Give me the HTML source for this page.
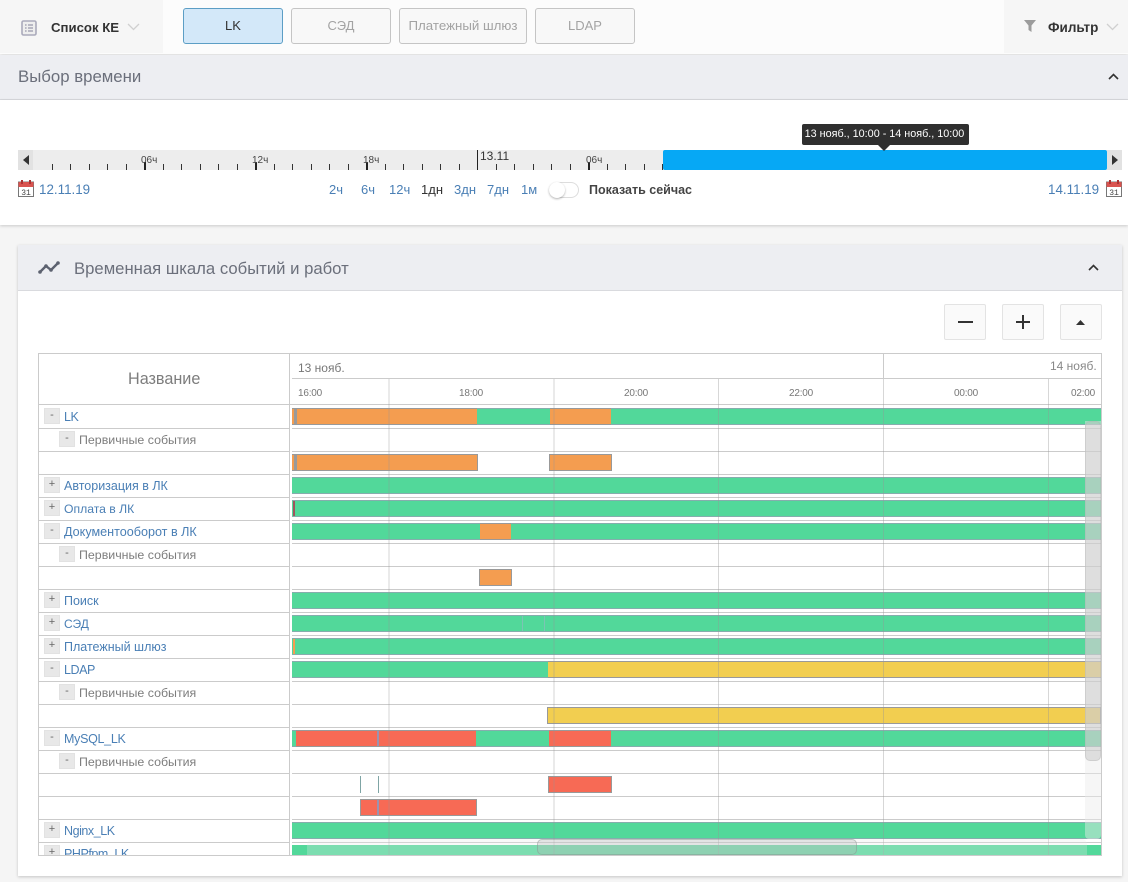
<!DOCTYPE html>
<html lang="ru"><head><meta charset="utf-8"><title>Временная шкала</title>
<style>
html,body{margin:0;padding:0;background:#f5f5f5}
body{width:1128px;height:882px;position:relative;overflow:hidden;font-family:"Liberation Sans",sans-serif;color:#333}
div,span,svg{position:absolute;box-sizing:border-box}
.t{white-space:nowrap;line-height:1}
.btn{top:8px;height:36px;width:100px;border:1px solid #c5c5c5;border-radius:3px;background:#f8f8f8;color:#a3a3a3;font-size:13px;text-align:center;line-height:34px;white-space:nowrap}
.tk{top:164px;width:1px;height:6px;background:#333}
.mj{top:162px;width:2px;height:8px;background:#222}
.p{top:183px;font-size:13px;line-height:1;color:#4a7fb5;white-space:nowrap}
.hl{height:1px;background:#cbcbcb}
.g{background:#52d89a;height:17px;border-top:1px solid #86adad;border-bottom:1px solid #86adad}
.o{background:#f49d50;height:17px;border-top:1px solid #999;border-bottom:1px solid #999}
.r{background:#f76a55;height:17px;border-top:1px solid #999;border-bottom:1px solid #999}
.y{background:#f2ce50;height:17px;border-top:1px solid #999;border-bottom:1px solid #999}
.b{border-left:1px solid #999;border-right:1px solid #999}
.vl{width:1px;background:rgba(150,150,150,.38);top:379px;height:476px}
.vw{width:2px;background:rgba(150,150,150,.2);top:379px;height:476px}
.tb{width:16px;height:16px;background:#e8e8e8;border:1px solid #e2e2e2;color:#666;font-size:11px;text-align:center;line-height:13px}
.n{font-size:12.500px;line-height:1;color:#4a7fb5;white-space:nowrap}
.l{letter-spacing:-.45px}
.s{font-size:12.400px;line-height:1;color:#7d7d7d;white-space:nowrap}
.hb{top:304px;width:42px;height:36px;background:#fafafa;border:1px solid #e3e3e3;border-radius:2px}
.h{font-size:10px;letter-spacing:-.2px;color:#777;line-height:1;white-space:nowrap;top:389px}
</style></head><body>

<div style="left:0;top:0;width:1128px;height:54px;background:#fcfcfc;box-shadow:0 1px 4px rgba(0,0,0,.12)"></div>
<div style="left:0;top:0;width:163px;height:53px;background:#f6f6f6"></div>
<div style="left:1004px;top:0;width:124px;height:53px;background:#f6f6f6"></div>
<svg style="left:21px;top:20px" width="16" height="16" viewBox="0 0 16 16"><rect x="1" y="1" width="14" height="14" rx="1.5" fill="#eee" stroke="#aab" stroke-width="1.6"/><path d="M4 5h1.6M7 5h5M4 8h1.6M7 8h5M4 11h1.6M7 11h5" stroke="#99a" stroke-width="1.3"/></svg>
<div class="t" style="left:51px;top:21px;font-size:13.200px;font-weight:bold;color:#333">Список КЕ</div>
<svg style="left:127px;top:23px" width="13" height="8" viewBox="0 0 13 8"><path d="M1 1l5.500 5.500L12 1" fill="none" stroke="#d0d0d0" stroke-width="1.3"/></svg>
<div class="btn" style="left:183px;background:#d3e8f9;border-color:#5c9ec5;color:#333">LK</div>
<div class="btn" style="left:291px">СЭД</div>
<div class="btn" style="left:399px;width:128px;font-size:13.300px">Платежный шлюз</div>
<div class="btn" style="left:535px">LDAP</div>
<svg style="left:1023px;top:19px" width="14" height="14" viewBox="0 0 14 14"><path d="M1 1h12L8.500 6.500V13L5.500 11V6.500Z" fill="#9c9c9c"/></svg>
<div class="t" style="left:1048px;top:21px;font-size:13.500px;font-weight:bold;color:#333">Фильтр</div>
<svg style="left:1106px;top:23px" width="13" height="8" viewBox="0 0 13 8"><path d="M1 1l5.500 5.500L12 1" fill="none" stroke="#d0d0d0" stroke-width="1.3"/></svg>

<div style="left:0;top:55px;width:1128px;height:45px;background:#edeef2;border-bottom:1px solid #d9dade"></div>
<div class="t" style="left:18px;top:69px;font-size:16.800px;color:#6b6f7b">Выбор времени</div>
<svg style="left:1108px;top:73px" width="11" height="8" viewBox="0 0 11 8"><path d="M1 6l4.500-4.500L10 6" fill="none" stroke="#333" stroke-width="1.600"/></svg>

<div style="left:0;top:100px;width:1128px;height:125px;background:#fff;box-shadow:0 1px 3px rgba(0,0,0,.18)"></div>
<div style="left:18px;top:150px;width:1104px;height:20px;background:#ededed"></div>
<div style="left:18px;top:150px;width:15px;height:20px;background:#e2e2e2"></div>
<div style="left:1107px;top:150px;width:15px;height:20px;background:#e2e2e2"></div>
<svg style="left:22px;top:155px" width="8" height="10"><path d="M7 0v10L1 5z" fill="#333"/></svg>
<svg style="left:1111px;top:155px" width="8" height="10"><path d="M1 0v10l6-5z" fill="#333"/></svg>

<div class="tk" style="left:52px"></div><div class="tk" style="left:70px"></div><div class="tk" style="left:89px"></div><div class="tk" style="left:107px"></div><div class="tk" style="left:126px"></div><div class="mj" style="left:144px"></div><div class="tk" style="left:163px"></div><div class="tk" style="left:181px"></div><div class="tk" style="left:200px"></div><div class="tk" style="left:218px"></div><div class="tk" style="left:237px"></div><div class="mj" style="left:255px"></div><div class="tk" style="left:274px"></div><div class="tk" style="left:292px"></div><div class="tk" style="left:311px"></div><div class="tk" style="left:329px"></div><div class="tk" style="left:348px"></div><div class="mj" style="left:366px"></div><div class="tk" style="left:385px"></div><div class="tk" style="left:403px"></div><div class="tk" style="left:422px"></div><div class="tk" style="left:440px"></div><div class="tk" style="left:459px"></div>
<div style="left:477px;top:150px;width:1px;height:20px;background:#222"></div>
<div class="tk" style="left:496px"></div><div class="tk" style="left:514px"></div><div class="tk" style="left:533px"></div><div class="tk" style="left:551px"></div><div class="tk" style="left:570px"></div><div class="mj" style="left:588px"></div><div class="tk" style="left:607px"></div><div class="tk" style="left:625px"></div><div class="tk" style="left:644px"></div><div class="tk" style="left:662px"></div>
<div class="t" style="left:141px;top:156px;font-size:10px;color:#444">06ч</div>
<div class="t" style="left:252px;top:156px;font-size:10px;color:#444">12ч</div>
<div class="t" style="left:363px;top:156px;font-size:10px;color:#444">18ч</div>
<div class="t" style="left:480px;top:150px;font-size:12px;color:#333">13.11</div>
<div class="t" style="left:586px;top:156px;font-size:10px;color:#444">06ч</div>

<div style="left:663px;top:150px;width:444px;height:20px;background:#06a8f5;border-radius:2px"></div>
<div style="left:802px;top:124px;width:167px;height:21px;background:#2f2f2f;border-radius:2px"></div>
<div class="t" style="left:802px;top:129px;width:165px;text-align:center;font-size:10.800px;color:#fff">13 нояб., 10:00 - 14 нояб., 10:00</div>
<svg style="left:878px;top:145px" width="12" height="6"><path d="M0 0h12L6 6z" fill="#2f2f2f"/></svg>

<svg style="left:18px;top:180px" width="16" height="17" viewBox="0 0 16 17"><rect x=".5" y="2" width="15" height="14.500" fill="#fff" stroke="#777"/><rect x=".5" y="2" width="15" height="5" fill="#d9534f"/><rect x="3" y="0" width="2" height="4" fill="#a33"/><rect x="11" y="0" width="2" height="4" fill="#a33"/><text x="8" y="15" font-size="8" font-family="Liberation Mono" text-anchor="middle" fill="#444">31</text></svg>
<div class="p" style="left:39px;font-size:13.400px">12.11.19</div>
<div class="p" style="left:329px">2ч</div>
<div class="p" style="left:361px">6ч</div>
<div class="p" style="left:389px">12ч</div>
<div class="p" style="left:421px;color:#333">1дн</div>
<div class="p" style="left:454px">3дн</div>
<div class="p" style="left:487px">7дн</div>
<div class="p" style="left:521px">1м</div>
<div style="left:549px;top:182px;width:30px;height:16px;border:1px solid #ddd;border-radius:8px;background:#fff"></div>
<div style="left:549px;top:182px;width:16px;height:16px;border-radius:50%;background:#fff;box-shadow:0 1px 2px rgba(0,0,0,.3)"></div>
<div class="t" style="left:589px;top:184px;font-size:12.500px;font-weight:bold;color:#444">Показать сейчас</div>
<div class="p" style="left:1048px;font-size:13.400px">14.11.19</div>
<svg style="left:1106px;top:180px" width="16" height="17" viewBox="0 0 16 17"><rect x=".5" y="2" width="15" height="14.500" fill="#fff" stroke="#777"/><rect x=".5" y="2" width="15" height="5" fill="#d9534f"/><rect x="3" y="0" width="2" height="4" fill="#a33"/><rect x="11" y="0" width="2" height="4" fill="#a33"/><text x="8" y="15" font-size="8" font-family="Liberation Mono" text-anchor="middle" fill="#444">31</text></svg>

<div style="left:18px;top:245px;width:1104px;height:631px;background:#fff;box-shadow:0 1px 3px rgba(0,0,0,.2)"></div>
<div style="left:18px;top:245px;width:1104px;height:46px;background:#edeef2;border-bottom:1px solid #d9dade"></div>
<svg style="left:38px;top:260px" width="22" height="15" viewBox="0 0 22 15"><path d="M2 12l6-6 5 4 7-7" fill="none" stroke="#5d6270" stroke-width="2.400"/><circle cx="2" cy="12" r="1.800" fill="#5d6270"/><circle cx="8" cy="6" r="1.800" fill="#5d6270"/><circle cx="13" cy="10" r="1.800" fill="#5d6270"/><circle cx="20" cy="3" r="1.800" fill="#5d6270"/></svg>
<div class="t" style="left:74px;top:261px;font-size:16.700px;color:#6b6f7b">Временная шкала событий и работ</div>
<svg style="left:1088px;top:264px" width="11" height="8" viewBox="0 0 11 8"><path d="M1 6l4.500-4.500L10 6" fill="none" stroke="#333" stroke-width="1.600"/></svg>

<div class="hb" style="left:944px"></div><div class="hb" style="left:1002px"></div><div class="hb" style="left:1060px"></div>
<div style="left:958px;top:321px;width:15px;height:2px;background:#333"></div>
<div style="left:1016px;top:321px;width:14px;height:2px;background:#333"></div>
<div style="left:1022px;top:315px;width:2px;height:14px;background:#333"></div>
<svg style="left:1076px;top:320px" width="10" height="5"><path d="M0 5h9L4.500 0z" fill="#333"/></svg>

<div style="left:38px;top:353px;width:1064px;height:503px;border:1px solid #cbcbcb"></div>
<div style="left:289px;top:353px;width:1px;height:503px;background:#cbcbcb"></div>
<div style="left:883px;top:353px;width:1px;height:25px;background:#cbcbcb"></div>
<div class="hl" style="left:292px;top:378px;width:810px"></div>
<div class="hl" style="left:38px;top:404px;width:1064px"></div>
<div class="t" style="left:128px;top:371px;font-size:16.200px;color:#7d7d7d">Название</div>
<div class="t" style="left:298px;top:362px;font-size:12px;color:#777">13 нояб.</div>
<div class="t" style="left:1050px;top:360px;font-size:12px;color:#888">14 нояб.</div>
<div class="h" style="left:298px">16:00</div><div class="h" style="left:459px">18:00</div><div class="h" style="left:624px">20:00</div><div class="h" style="left:789px">22:00</div><div class="h" style="left:954px">00:00</div><div class="h" style="left:1071px">02:00</div>

<div class="hl" style="left:38px;top:428px;width:1064px"></div><div class="hl" style="left:38px;top:451px;width:1064px"></div><div class="hl" style="left:38px;top:474px;width:1064px"></div><div class="hl" style="left:38px;top:497px;width:1064px"></div><div class="hl" style="left:38px;top:520px;width:1064px"></div><div class="hl" style="left:38px;top:543px;width:1064px"></div><div class="hl" style="left:38px;top:566px;width:1064px"></div><div class="hl" style="left:38px;top:589px;width:1064px"></div><div class="hl" style="left:38px;top:612px;width:1064px"></div><div class="hl" style="left:38px;top:635px;width:1064px"></div><div class="hl" style="left:38px;top:658px;width:1064px"></div><div class="hl" style="left:38px;top:681px;width:1064px"></div><div class="hl" style="left:38px;top:704px;width:1064px"></div><div class="hl" style="left:38px;top:727px;width:1064px"></div><div class="hl" style="left:38px;top:750px;width:1064px"></div><div class="hl" style="left:38px;top:773px;width:1064px"></div><div class="hl" style="left:38px;top:796px;width:1064px"></div><div class="hl" style="left:38px;top:819px;width:1064px"></div><div class="hl" style="left:38px;top:842px;width:1064px"></div>
<div style="left:290px;top:405px;width:2px;height:450px;background:#fff"></div>

<!-- bars -->
<div class="g" style="left:292px;top:408px;width:809px"></div>
<div class="o" style="left:292px;top:408px;width:185px"></div><div style="left:294px;top:409px;width:3px;height:15px;background:#9a9a9a"></div>
<div class="o" style="left:550px;top:408px;width:61px"></div>
<div class="o" style="left:292px;top:454px;width:186px;border-right:1px solid #999"></div><div style="left:294px;top:455px;width:3px;height:15px;background:#9a9a9a"></div>
<div class="o b" style="left:549px;top:454px;width:63px"></div>
<div class="g" style="left:292px;top:477px;width:809px"></div>
<div class="g" style="left:292px;top:500px;width:809px"></div><div style="left:293px;top:501px;width:2px;height:15px;background:#a0545e"></div>
<div class="g" style="left:292px;top:523px;width:809px"></div><div class="o" style="left:480px;top:523px;width:31px"></div>
<div class="o b" style="left:479px;top:569px;width:33px"></div>
<div class="g" style="left:292px;top:592px;width:809px"></div>
<div class="g" style="left:292px;top:615px;width:809px"></div>
<div style="left:522px;top:616px;width:1px;height:15px;background:#7cc4b4"></div><div style="left:544px;top:616px;width:1px;height:15px;background:#7cc4b4"></div>
<div class="g" style="left:292px;top:638px;width:809px"></div><div style="left:293px;top:639px;width:2px;height:15px;background:#f49d50"></div>
<div class="g" style="left:292px;top:661px;width:256px"></div><div class="y" style="left:548px;top:661px;width:553px"></div>
<div class="y b" style="left:547px;top:707px;width:554px"></div>
<div class="g" style="left:292px;top:730px;width:809px"></div>
<div class="r" style="left:296px;top:730px;width:180px"></div><div style="left:377px;top:731px;width:2px;height:15px;background:#9a93b0"></div>
<div class="r" style="left:549px;top:730px;width:62px"></div>
<div style="left:360px;top:776px;width:1px;height:17px;background:#7fa5a5"></div><div style="left:378px;top:776px;width:1px;height:17px;background:#7fa5a5"></div>
<div class="r b" style="left:548px;top:776px;width:64px"></div>
<div class="r b" style="left:360px;top:799px;width:117px"></div><div style="left:377px;top:800px;width:2px;height:15px;background:#9a93b0"></div>
<div class="g" style="left:292px;top:822px;width:809px"></div>
<div style="left:292px;top:845px;width:809px;height:10px;background:#52d89a"></div>

<div class="vw" style="left:388px"></div><div class="vw" style="left:553px"></div><div class="vl" style="left:718px"></div><div class="vl" style="left:883px"></div><div class="vl" style="left:1048px"></div>

<!-- tree -->
<div class="tb" style="left:44px;top:408px">-</div><div class="n l" style="left:64px;top:411px">LK</div>
<div class="tb" style="left:59px;top:431px">-</div><div class="s" style="left:79px;top:434px">Первичные события</div>
<div class="tb" style="left:44px;top:477px">+</div><div class="n" style="left:64px;top:480px">Авторизация в ЛК</div>
<div class="tb" style="left:44px;top:500px">+</div><div class="n" style="left:64px;top:503px;font-size:12.200px">Оплата в ЛК</div>
<div class="tb" style="left:44px;top:523px">-</div><div class="n" style="left:64px;top:526px;font-size:12.600px">Документооборот в ЛК</div>
<div class="tb" style="left:59px;top:546px">-</div><div class="s" style="left:79px;top:549px">Первичные события</div>
<div class="tb" style="left:44px;top:592px">+</div><div class="n" style="left:64px;top:595px">Поиск</div>
<div class="tb" style="left:44px;top:615px">+</div><div class="n" style="left:64px;top:618px;font-size:12px">СЭД</div>
<div class="tb" style="left:44px;top:638px">+</div><div class="n" style="left:64px;top:641px">Платежный шлюз</div>
<div class="tb" style="left:44px;top:661px">-</div><div class="n l" style="left:64px;top:664px">LDAP</div>
<div class="tb" style="left:59px;top:684px">-</div><div class="s" style="left:79px;top:687px">Первичные события</div>
<div class="tb" style="left:44px;top:730px">-</div><div class="n l" style="left:64px;top:733px;letter-spacing:-.3px">MySQL_LK</div>
<div class="tb" style="left:59px;top:753px">-</div><div class="s" style="left:79px;top:756px">Первичные события</div>
<div class="tb" style="left:44px;top:822px">+</div><div class="n l" style="left:64px;top:825px">Nginx_LK</div>
<div style="left:39px;top:843px;width:250px;height:12px;overflow:hidden"><div class="tb" style="left:5px;top:2px">+</div><div class="n l" style="left:25px;top:5px">PHPfpm_LK</div></div>

<!-- scrollbars -->
<div style="left:1085px;top:421px;width:16px;height:418px;background:rgba(235,235,235,.45);border-radius:0 0 4px 4px"></div>
<div style="left:1085px;top:421px;width:16px;height:340px;background:rgba(190,190,190,.43);border:1px solid rgba(170,170,170,.3);border-radius:5px"></div>
<div style="left:307px;top:839px;width:780px;height:16px;background:rgba(235,235,235,.28);border-radius:5px 5px 0 0"></div>
<div style="left:537px;top:839px;width:320px;height:16px;background:rgba(180,185,182,.32);border:1px solid rgba(130,140,135,.4);border-radius:5px"></div>

</body></html>
